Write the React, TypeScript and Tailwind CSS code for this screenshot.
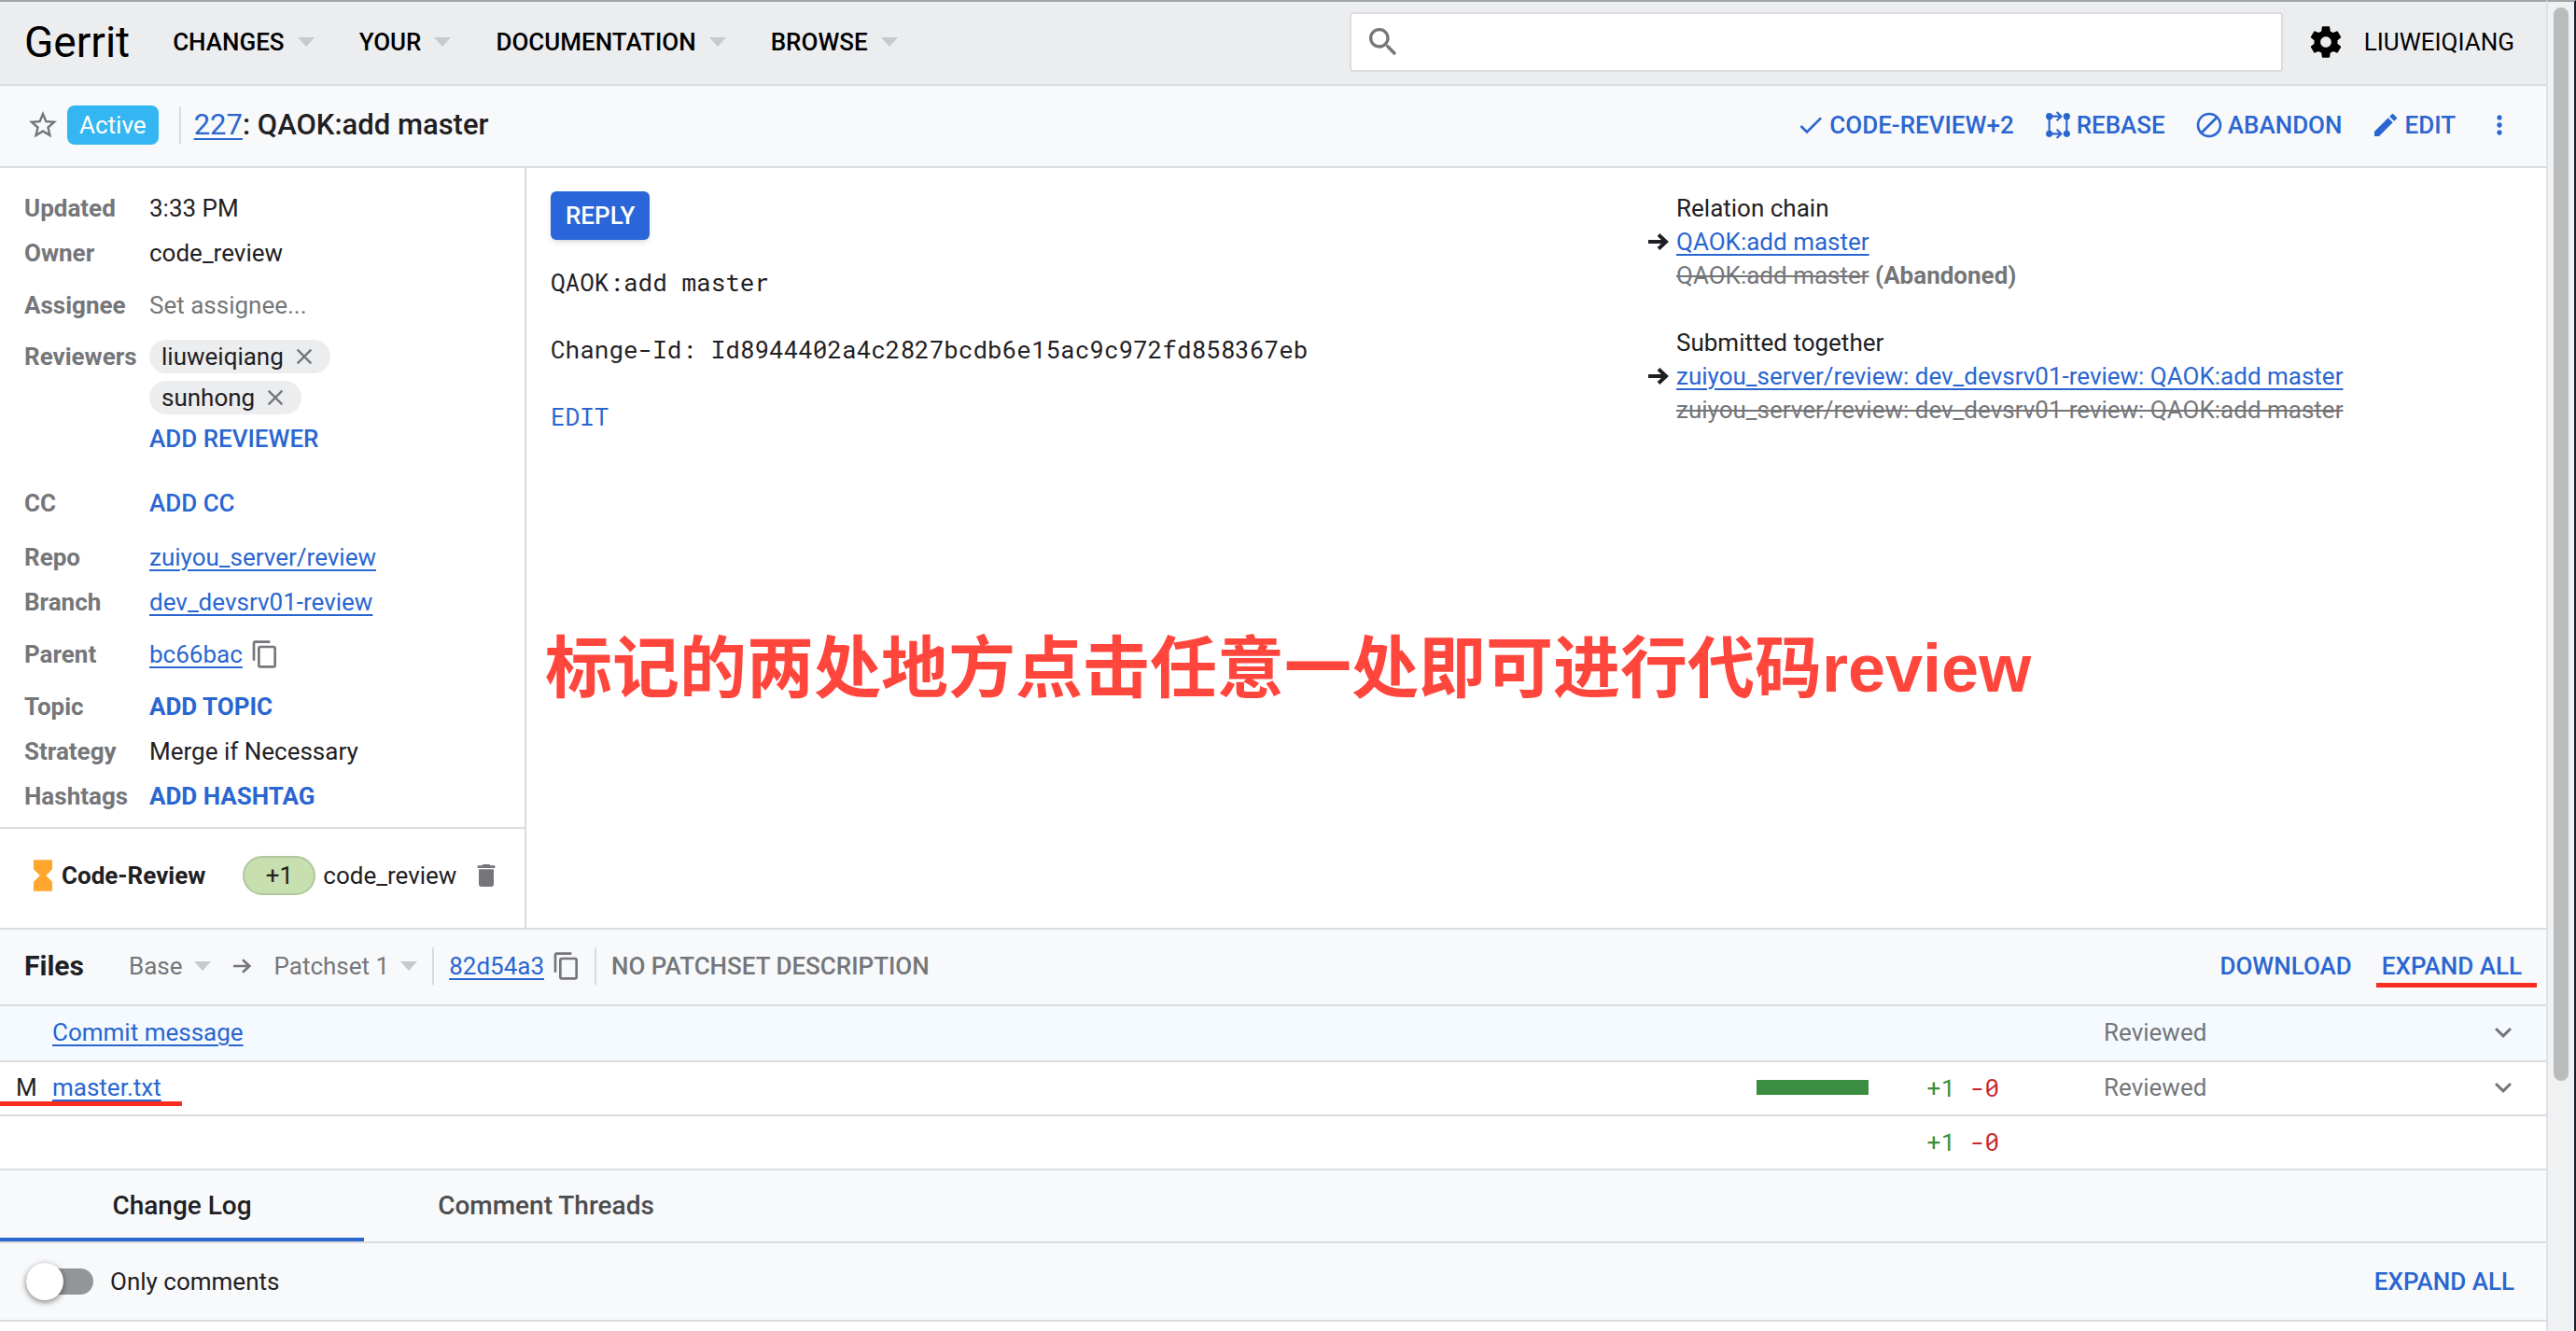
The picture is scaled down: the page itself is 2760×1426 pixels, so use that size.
import React, { useState } from "react";

const BLUE = "text-[#2a66d0]";
const SANS = "font-['Roboto','Noto_Sans_CJK_SC',sans-serif]";
const MONO = "font-['Roboto_Mono','DejaVu_Sans_Mono',monospace]";

function Icon({ d, className = "" }: { d: string; className?: string }) {
  return (
    <svg viewBox="0 0 24 24" fill="currentColor" aria-hidden="true" className={`shrink-0 ${className}`}>
      <path d={d} />
    </svg>
  );
}

const P = {
  star: "M22 9.24l-7.19-.62L12 2 9.19 8.63 2 9.24l5.46 4.73L5.82 21 12 17.27 18.18 21l-1.63-7.03L22 9.24zM12 15.4l-3.76 2.27 1-4.28-3.32-2.88 4.38-.38L12 6.1l1.71 4.04 4.38.38-3.32 2.88 1 4.28L12 15.4z",
  search: "M15.5 14h-.79l-.28-.27C15.41 12.59 16 11.11 16 9.5 16 5.91 13.09 3 9.5 3S3 5.91 3 9.5 5.91 16 9.5 16c1.61 0 3.09-.59 4.23-1.57l.27.28v.79l5 4.99L20.49 19l-4.99-5zm-6 0C7.01 14 5 11.99 5 9.5S7.01 5 9.5 5 14 7.01 14 9.5 11.99 14 9.5 14z",
  gear: "M19.43 12.98c.04-.32.07-.64.07-.98s-.03-.66-.07-.98l2.11-1.65c.19-.15.24-.42.12-.64l-2-3.46c-.12-.22-.39-.3-.61-.22l-2.49 1c-.52-.4-1.08-.73-1.69-.98l-.38-2.65C14.46 2.18 14.25 2 14 2h-4c-.25 0-.46.18-.49.42l-.38 2.65c-.61.25-1.17.59-1.69.98l-2.49-1c-.23-.09-.49 0-.61.22l-2 3.46c-.13.22-.07.49.12.64l2.11 1.65c-.04.32-.07.65-.07.98s.03.66.07.98l-2.11 1.65c-.19.15-.24.42-.12.64l2 3.46c.12.22.39.3.61.22l2.49-1c.52.4 1.08.73 1.69.98l.38 2.65c.03.24.24.42.49.42h4c.25 0 .46-.18.49-.42l.38-2.65c.61-.25 1.17-.59 1.69-.98l2.49 1c.23.09.49 0 .61-.22l2-3.46c.12-.22.07-.49-.12-.64l-2.11-1.65zM12 15.5c-1.93 0-3.5-1.57-3.5-3.5s1.57-3.5 3.5-3.5 3.5 1.57 3.5 3.5-1.57 3.5-3.5 3.5z",
  check: "M9 16.17L4.83 12l-1.42 1.41L9 19 21 7l-1.41-1.41z",
  block: "M12 2C6.48 2 2 6.48 2 12s4.48 10 10 10 10-4.48 10-10S17.52 2 12 2zM4 12c0-4.42 3.58-8 8-8 1.85 0 3.55.63 4.9 1.69L5.69 16.9C4.63 15.55 4 13.85 4 12zm8 8c-1.85 0-3.55-.63-4.9-1.69L18.31 7.1C19.37 8.45 20 10.15 20 12c0 4.42-3.58 8-8 8z",
  edit: "M3 17.25V21h3.75L17.81 9.94l-3.75-3.75L3 17.25zM20.71 7.04c.39-.39.39-1.02 0-1.41l-2.34-2.34c-.39-.39-1.02-.39-1.41 0l-1.83 1.83 3.75 3.75 1.83-1.83z",
  more: "M12 8c1.1 0 2-.9 2-2s-.9-2-2-2-2 .9-2 2 .9 2 2 2zm0 2c-1.1 0-2 .9-2 2s.9 2 2 2 2-.9 2-2-.9-2-2-2zm0 6c-1.1 0-2 .9-2 2s.9 2 2 2 2-.9 2-2-.9-2-2-2z",
  close: "M19 6.41L17.59 5 12 10.59 6.41 5 5 6.41 10.59 12 5 17.59 6.41 19 12 13.41 17.59 19 19 17.59 13.41 12z",
  copy: "M16 1H4c-1.1 0-2 .9-2 2v14h2V3h12V1zm3 4H8c-1.1 0-2 .9-2 2v14c0 1.1.9 2 2 2h11c1.1 0 2-.9 2-2V7c0-1.1-.9-2-2-2zm0 16H8V7h11v14z",
  hourglass: "M6 2v6h.01L6 8.01 10 12l-4 4 .01.01H6V22h12v-5.99h-.01L18 16l-4-4 4-3.99-.01-.01H18V2H6z",
  trash: "M6 19c0 1.1.9 2 2 2h8c1.1 0 2-.9 2-2V7H6v12zM19 4h-3.5l-1-1h-5l-1 1H5v2h14V4z",
  chevron: "M7.41 8.59L12 13.17l4.59-4.58L18 10l-6 6-6-6 1.41-1.41z",
};

function RebaseIcon() {
  return (
    <svg viewBox="0 0 24 24" className="size-8 shrink-0" fill="none" stroke="currentColor" strokeWidth="1.6" aria-hidden="true">
      <g fill="currentColor" stroke="none">
        <circle cx="5" cy="5" r="2.7" />
        <circle cx="19" cy="5" r="2.7" />
        <circle cx="5" cy="19" r="2.7" />
        <circle cx="19" cy="19" r="2.7" />
      </g>
      <path d="M5 5v14M19 5v14M5 5h9M5 19h9M11 1.500l3.500 3.500-3.500 3.500M11 15.500l3.500 3.500-3.500 3.500" />
    </svg>
  );
}

function Caret() {
  return (
    <svg viewBox="0 0 18 10" className="h-[10px] w-[18px] shrink-0 text-[#c8c9cb]" aria-hidden="true">
      <path d="M0 0h18L9 10z" fill="currentColor" />
    </svg>
  );
}

function Arrow({ className = "" }: { className?: string }) {
  return (
    <svg viewBox="0 0 22 18" className={className} fill="none" stroke="currentColor" aria-hidden="true">
      <path d="M0 9h19M11 1.500l8 7.500-8 7.500" />
    </svg>
  );
}

function Action({ icon, label }: { icon: React.ReactNode; label: string }) {
  return (
    <button className="flex items-center gap-1 font-medium">
      {icon}
      {label}
    </button>
  );
}

function Row({ label, className = "", children }: { label: string; className?: string; children: React.ReactNode }) {
  return (
    <div className={`flex ${className}`}>
      <dt className="w-[134px] shrink-0 font-bold text-[#757679]">{label}</dt>
      <dd>{children}</dd>
    </div>
  );
}

function Link({ children }: { children: React.ReactNode }) {
  return (
    <a href="#" className="text-[#2a66d0] underline decoration-2 underline-offset-4">
      {children}
    </a>
  );
}

function Chip({ name }: { name: string }) {
  return (
    <span className="flex h-9 w-fit items-center gap-2 rounded-full bg-[#ecedef] pr-[14px] pl-[13px]">
      {name}
      <button aria-label={`Remove ${name}`}>
        <Icon d={P.close} className="size-[28px] text-[#757679]" />
      </button>
    </span>
  );
}

function Current({ children }: { children: React.ReactNode }) {
  return (
    <li className="flex items-center">
      <Arrow className="mr-2 h-[18px] w-[22px] stroke-[4]" />
      {children}
    </li>
  );
}

function Delta() {
  return (
    <>
      <span className="text-[#388e3c]">+1</span> <span className="text-[#c6282f]">-0</span>
    </>
  );
}

const menus = ["CHANGES", "YOUR", "DOCUMENTATION", "BROWSE"];

export default function App() {
  const [only, setOnly] = useState(false);
  return (
    <div className={`flex h-screen overflow-hidden bg-white text-[26px] leading-9 text-[#1f2023] ${SANS}`}>
      <div className="flex min-w-0 flex-1 flex-col">
        <header className="flex h-[92px] shrink-0 items-center border-t-2 border-b-2 border-t-[#a3a5a6] border-b-[#dadce0] bg-[#ecedef] pr-[34px] pb-[2px] pl-[26px] text-black">
          <a href="#" className="mr-[46px] text-[46px]">Gerrit</a>
          <nav className="flex gap-12">
            {menus.map((m) => (
              <button key={m} className="flex items-center gap-[14px] font-medium">
                {m}
                <Caret />
              </button>
            ))}
          </nav>
          <label className="mr-[26px] ml-auto flex h-[64px] w-[1000px] items-center rounded border-2 border-[#dadce0] bg-white pl-[14px]">
            <Icon d={P.search} className="size-10 text-[#757679]" />
            <input aria-label="Search" className="min-w-0 flex-1 px-2 outline-none" />
          </label>
          <button aria-label="Settings" className="mr-[21px]">
            <Icon d={P.gear} className="size-10" />
          </button>
          <a href="#">LIUWEIQIANG</a>
        </header>

        <section className="flex h-[88px] shrink-0 items-center border-b-2 border-[#dadce0] bg-[#f8f9fb] pr-[34px] pb-[2px] pl-[28px]">
          <button aria-label="Star this change">
            <Icon d={P.star} className="size-9 text-[#757679]" />
          </button>
          <span className="ml-2 flex h-[42px] items-center rounded-lg bg-[#34b6f3] px-[13px] text-white">Active</span>
          <h1 className="ml-[22px] flex h-10 items-center border-l-2 border-[#dadce0] pl-[14px] text-[31px] font-medium">
            <span>
              <a href="#" className="font-normal text-[#2a66d0] underline decoration-2 underline-offset-4">227</a>: QAOK:add master
            </span>
          </h1>
          <div className={`ml-auto flex items-center gap-[31px] ${BLUE}`}>
            <Action icon={<Icon d={P.check} className="size-8" />} label="CODE-REVIEW+2" />
            <Action icon={<RebaseIcon />} label="REBASE" />
            <Action icon={<Icon d={P.block} className="size-8" />} label="ABANDON" />
            <Action icon={<Icon d={P.edit} className="size-8" />} label="EDIT" />
            <button aria-label="More actions">
              <Icon d={P.more} className="size-8" />
            </button>
          </div>
        </section>

        <main className="flex h-[816px] shrink-0 border-b-2 border-[#dadce0]">
          <aside className="flex w-[564px] shrink-0 flex-col border-r-2 border-[#dadce0]">
            <dl className="h-[708px] border-b-2 border-[#dadce0] pt-[25px] pl-[26px]">
              <Row label="Updated" className="mb-3">3:33 PM</Row>
              <Row label="Owner" className="mb-5">code_review</Row>
              <Row label="Assignee" className="mb-[19px]">
                <span className="text-[#757679]">Set assignee...</span>
              </Row>
              <Row label="Reviewers" className="mb-[33px]">
                <div className="flex flex-col gap-2">
                  <Chip name="liuweiqiang" />
                  <Chip name="sunhong" />
                  <button className={`text-left font-medium ${BLUE}`}>ADD REVIEWER</button>
                </div>
              </Row>
              <Row label="CC" className="mb-[22px]">
                <button className={`font-medium ${BLUE}`}>ADD CC</button>
              </Row>
              <Row label="Repo" className="mb-3"><Link>zuiyou_server/review</Link></Row>
              <Row label="Branch" className="mb-5"><Link>dev_devsrv01-review</Link></Row>
              <Row label="Parent" className="mb-5">
                <span className="flex items-center gap-2">
                  <Link>bc66bac</Link>
                  <button aria-label="Copy parent commit"><Icon d={P.copy} className="size-8 text-[#757679]" /></button>
                </span>
              </Row>
              <Row label="Topic" className="mb-3"><button className={`font-bold ${BLUE}`}>ADD TOPIC</button></Row>
              <Row label="Strategy" className="mb-3">Merge if Necessary</Row>
              <Row label="Hashtags"><button className={`font-bold ${BLUE}`}>ADD HASHTAG</button></Row>
            </dl>
            <div className="flex flex-1 items-center pb-[6px] pl-[26px]">
              <Icon d={P.hourglass} className="size-10 text-[#ffa62f]" />
              <span className="font-bold">Code-Review</span>
              <span className="ml-10 flex h-[42px] w-[78px] items-center justify-center rounded-full border-2 border-[#b1c69c] bg-[#c8dfb0]">+1</span>
              <span className="ml-2">code_review</span>
              <button aria-label="Remove vote" className="ml-4"><Icon d={P.trash} className="size-8 text-[#757679]" /></button>
            </div>
          </aside>

          <section className="min-w-0 flex-1 pt-[25px]">
            <div className="flex pl-[26px]">
              <div className={`w-[1176px] shrink-0 ${MONO}`}>
                <button className={`mb-[27px] flex h-[52px] items-center rounded-md bg-[#2a66d9] px-4 font-medium text-white shadow-md ${SANS}`}>REPLY</button>
                <p className="mb-9">QAOK:add master</p>
                <p className="mb-9">Change-Id: Id8944402a4c2827bcdb6e15ac9c972fd858367eb</p>
                <button className={BLUE}>EDIT</button>
              </div>
              <div>
                <h2 className="pl-[30px]">Relation chain</h2>
                <ul className="mb-9">
                  <Current><Link>QAOK:add master</Link></Current>
                  <li className="pl-[30px] text-[#757679]">
                    <a href="#" className="line-through">QAOK:add master</a> <b className="font-bold">(Abandoned)</b>
                  </li>
                </ul>
                <h2 className="pl-[30px]">Submitted together</h2>
                <ul>
                  <Current><Link>zuiyou_server/review: dev_devsrv01-review: QAOK:add master</Link></Current>
                  <li className="pl-[30px] text-[#757679]">
                    <a href="#" className="line-through">zuiyou_server/review: dev_devsrv01-review: QAOK:add master</a>
                  </li>
                </ul>
              </div>
            </div>
            <p className="mt-[202px] pl-5 font-['Liberation_Sans','Noto_Sans_CJK_SC',sans-serif] text-[72px] leading-[100px] font-bold text-[#ff463d]">
              标记的两处地方点击任意一处即可进行代码review
            </p>
          </section>
        </main>

        <section className="flex h-[82px] shrink-0 items-center border-b-2 border-[#dadce0] bg-[#f8f9fb] pb-[2px] pl-[26px] text-[#757679]">
          <h2 className="text-[30px] font-bold text-[#1f2023]">Files</h2>
          <button className="ml-[48px] flex items-center gap-3">Base <Caret /></button>
          <Arrow className="mx-6 h-[18px] w-[20px] stroke-[3]" />
          <button className="flex items-center gap-3">Patchset 1 <Caret /></button>
          <div className="ml-4 flex h-10 items-center gap-2 border-x-2 border-[#dadce0] pr-[14px] pl-4">
            <Link>82d54a3</Link>
            <button aria-label="Copy commit"><Icon d={P.copy} className="size-8" /></button>
          </div>
          <button className="ml-4 font-medium">NO PATCHSET DESCRIPTION</button>
          <button className={`ml-auto font-medium ${BLUE}`}>DOWNLOAD</button>
          <button className={`relative mr-[26px] ml-[32px] font-medium ${BLUE}`}>
            EXPAND ALL
            <span className="absolute top-9 -right-4 -left-[6px] h-[5px] bg-[#fc2d20]" />
          </button>
        </section>

        <table className="w-full shrink-0 table-fixed [&_td]:pb-[2px]">
          <colgroup>
            <col className="w-[56px]" />
            <col />
            <col className="w-[182px]" />
            <col className="w-[190px]" />
            <col className="w-[410px]" />
            <col className="w-[64px]" />
          </colgroup>
          <tbody>
            <tr className="h-[59px] border-b-2 border-[#dadce0] bg-[#f4faff]">
              <td />
              <td><Link>Commit message</Link></td>
              <td />
              <td />
              <td className="text-[#757679]">Reviewed</td>
              <td>
                <button aria-label="Expand commit message" className="flex"><Icon d={P.chevron} className="size-9 text-[#757679]" /></button>
              </td>
            </tr>
            <tr className="h-[58px] border-b-2 border-[#dadce0]">
              <td className="relative pl-[17px]">
                M<span className="absolute bottom-[9px] left-0 h-[5px] w-[195px] bg-[#fc2d20]" />
              </td>
              <td><Link>master.txt</Link></td>
              <td><div className="h-4 w-[120px] bg-[#3b8e41]" /></td>
              <td className={MONO}><Delta /></td>
              <td className="text-[#757679]">Reviewed</td>
              <td>
                <button aria-label="Expand master.txt" className="flex"><Icon d={P.chevron} className="size-9 text-[#757679]" /></button>
              </td>
            </tr>
            <tr className="h-[58px] border-b-2 border-[#dadce0]">
              <td />
              <td />
              <td />
              <td className={MONO}><Delta /></td>
              <td />
              <td />
            </tr>
          </tbody>
        </table>

        <div role="tablist" className="flex h-[78px] shrink-0 border-b-2 border-[#dadce0] bg-[#f8f9fb] text-[28px] font-medium">
          <button role="tab" aria-selected="true" className="w-[390px] border-b-4 border-[#2a66d0] pt-1">Change Log</button>
          <button role="tab" aria-selected="false" className="w-[390px] text-[#4b4d50]">Comment Threads</button>
        </div>

        <section className="flex h-[84px] shrink-0 items-center border-b-2 border-[#dadce0] bg-[#f8f9fb] pr-[34px] pl-[28px]">
          <label className="flex items-center gap-[18px]">
            <span className="relative flex h-7 w-[72px] items-center rounded-full bg-[#949597]">
              <input type="checkbox" role="switch" checked={only} onChange={() => setOnly(!only)} className="peer absolute inset-0 opacity-0" />
              <span className="size-10 rounded-full bg-white shadow-[0_2px_6px_rgba(0,0,0,0.5)] peer-checked:ml-8" />
            </span>
            Only comments
          </label>
          <button className={`ml-auto font-medium ${BLUE}`}>EXPAND ALL</button>
        </section>
      </div>

      <div className="flex w-[32px] shrink-0 justify-center border-t-2 border-r-2 border-l-2 border-t-[#a3a5a6] border-r-[#16202e] border-l-[#e0e1e3] bg-[#f0f1f3]">
        <div className="mt-[6px] h-[1150px] w-4 rounded-full bg-[#babbbd]" />
      </div>
    </div>
  );
}
